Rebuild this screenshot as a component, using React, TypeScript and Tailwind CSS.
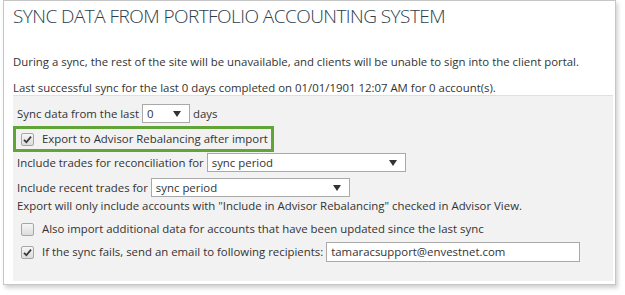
import React from 'react'

const font = { fontFamily: '"Open Sans", "Noto Sans", Arial, sans-serif' }

function Caret() {
  return (
    <svg width="8" height="6" viewBox="0 0 8 6" className="shrink-0">
      <path d="M0 0 H8 L4 6 Z" fill="#333" />
    </svg>
  )
}

function Select({ value, width }: { value: string; width: string }) {
  return (
    <div className={`${width} h-[19px] border border-[#a9a9a9] bg-white flex items-center justify-between pl-[4px] pr-[8px] text-[#333]`}>
      <span>{value}</span>
      <Caret />
    </div>
  )
}

function Check({ checked }: { checked: boolean }) {
  return (
    <div className="w-[13px] h-[13px] rounded-[2px] border border-[#a6a6a6] bg-gradient-to-b from-[#f6f6f6] to-[#dcdcdc] flex items-center justify-center shrink-0">
      {checked && (
        <svg width="9" height="9" viewBox="0 0 9 9">
          <path d="M1 4.8 L3.4 7.2 L8 1.6" fill="none" stroke="#3a3a3a" strokeWidth="1.8" />
        </svg>
      )}
    </div>
  )
}

export default function App() {
  return (
    <div className="w-[625px] h-[295px] bg-white overflow-hidden" style={font}>
      <div className="ml-[3px] w-[613px] h-[285px] border border-[#c6c6c6] bg-white shadow-[2px_3px_4px_rgba(0,0,0,0.18)] pl-[9px] pr-[3px] text-[11.4px] text-[#333] whitespace-nowrap">
        <div className="h-[30px] leading-[30px] text-[19px] font-light text-[#2c3e4c] tracking-[-0.55px]">
          SYNC DATA FROM PORTFOLIO ACCOUNTING SYSTEM
        </div>
        <div className="mt-[23px] h-[16px] leading-[16px]">
          During a sync, the rest of the site will be unavailable, and clients will be unable to sign into the client portal.
        </div>
        <div className="mt-[10px] h-[15px] leading-[15px]">
          Last successful sync for the last 0 days completed on 01/01/1901 12:07 AM for 0 account(s).
        </div>
        <div className="w-[600px] h-[186px] bg-[#f2f2f2] border-t border-[#e0e0e0] pt-[8px]">
          <div className="flex items-center gap-[3px] pl-[4px] h-[19px]">
            <span>Sync data from the last</span>
            <Select value="0" width="w-[48px]" />
            <span>days</span>
          </div>
          <div className="mt-[3px] w-[261px] h-[26px] border-[3px] border-[#62a537] flex items-center gap-[8px] pl-[5px]">
            <Check checked />
            <span>Export to Advisor Rebalancing after import</span>
          </div>
          <div className="mt-[1px] flex items-center gap-[3px] pl-[4px] h-[19px]">
            <span>Include trades for reconciliation for</span>
            <Select value="sync period" width="w-[199px]" />
          </div>
          <div className="mt-[6px] flex items-center gap-[3px] pl-[4px] h-[19px]">
            <span>Include recent trades for</span>
            <Select value="sync period" width="w-[199px]" />
          </div>
          <div className="mt-[1px] pl-[4px] h-[16px] leading-[16px]">
            Export will only include accounts with "Include in Advisor Rebalancing" checked in Advisor View.
          </div>
          <div className="mt-[6px] flex items-center gap-[8px] pl-[8px] h-[18px]">
            <Check checked={false} />
            <span>Also import additional data for accounts that have been updated since the last sync</span>
          </div>
          <div className="mt-[4px] flex items-center gap-[8px] pl-[8px] h-[20px]">
            <Check checked />
            <span>If the sync fails, send an email to following recipients:</span>
            <div className="-ml-[5px] w-[254px] h-[20px] border border-[#a9a9a9] bg-white pl-[4px] leading-[18px]">
              tamaracsupport@envestnet.com
            </div>
          </div>
        </div>
      </div>
    </div>
  )
}
